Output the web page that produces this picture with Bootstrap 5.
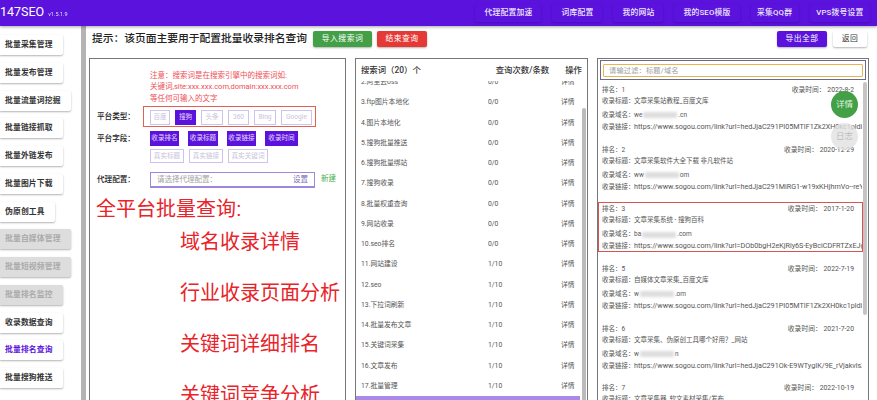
<!DOCTYPE html>
<html lang="zh"><head><meta charset="utf-8"><title>147SEO</title>
<link rel="stylesheet" href="https://cdn.jsdelivr.net/npm/bootstrap@5.3.0/dist/css/bootstrap.min.css">
<style>
html,body{height:400px;overflow:hidden;margin:0}
body{font-family:Roboto,"Noto Sans CJK SC",sans-serif;color:#333;background:#fff;font-size:8px}
.shell{height:400px;width:877px;overflow:hidden}
.topbar{height:26px;background:#5a12dc;box-shadow:0 1px 3px rgba(0,0,0,.35);color:#fff;position:relative;z-index:2}
.logo{font-size:12.5px;line-height:18px}
.ver{font-size:5.5px;margin-left:4px;opacity:.85}
.topnav{padding-right:7px;gap:11px}
.topnav span{padding:3px 9px 4px;font-size:7.8px;letter-spacing:.2px;font-weight:500;box-shadow:0 1px 2px rgba(40,0,110,.35);border-radius:2px;color:#eee8ff;white-space:nowrap}
.topnav span.tight{padding-left:6.5px;padding-right:6.5px}
.side{width:81px;padding-top:9px;gap:7.75px;flex:none;overflow:hidden}
.sidebtn{height:20px;line-height:20px;padding:0 10px 0 5px;font-size:7.8px;font-weight:700;color:#333;background:#fff;border-radius:0 2px 2px 0;box-shadow:0 1px 2px rgba(0,0,0,.3);letter-spacing:.02em;white-space:nowrap;align-self:flex-start;flex:none}
.sidebtn.off{background:#ddd;color:#aaa}
.sidebtn.on{color:#5a12dc}
.vbar{width:5px;background:#b4b4b4;flex:none}
.workarea{padding-left:3px;width:791px;flex:none}
.headrow{height:32px;padding:0 10px 6px 3px}
.ttl{font-size:10.75px;font-weight:500;color:#222;white-space:nowrap;margin-right:6px}
.act{font-size:7.8px;height:16px;line-height:16px;padding:0;border:0;border-radius:2px;color:#fff;letter-spacing:.5px;box-shadow:0 1px 2px rgba(0,0,0,.3)}
.act:hover{color:#fff}
.actg{background:#43a047;width:59px}
.actr{background:#e53935;width:50px;margin-left:5px}
.actp{background:#5a12dc;width:50px}
.actw{background:#fff;color:#333;width:34px;margin-left:6px}
.actw:hover{color:#333}
.panes{gap:9px}
.pane{height:342px;border:1px solid #777;border-bottom:0;overflow:hidden;flex:none;background:#fff;position:relative}
.pa{width:257px}
.pb{width:233px}
.pc{width:272px}
.note{color:#ef4d55;font-size:7.5px;line-height:11.4px;padding:11px 0 0 60px;height:42px;white-space:nowrap}
.lab{width:54px;padding-left:7px;font-size:7.6px;font-weight:500;color:#222;flex:none;white-space:nowrap}
.typebox{border:1px solid #e2604f;height:21px;width:173px;margin-left:-1px;padding:3px 0 0 6px;gap:5px}
.tag{height:14.5px;line-height:12.5px;font-size:6.6px;border:1px solid #cfc3ee;color:#c9c3dc;padding:0;text-align:center;white-space:nowrap;flex:none}
.tag.sel{background:#5a12dc;border-color:#5a12dc;color:#e6dcff}
.fields{gap:9px;margin-bottom:3px}
.fields2{gap:5px}
.fields .tag{color:#e6dcff}
.fieldcol{margin-left:6px}
.proxy{border:1px solid #9f86de;border-width:1px 1px 2px 1px;height:16px;width:165px;margin-left:6px;padding:0 6px;color:#a3a3a3;font-size:7.5px;line-height:13px}
.proxy b{font-weight:400;color:#7b6bb0}
.newlink{color:#4caf50;font-size:7.5px;margin-left:6px;padding-bottom:3px}
.bigred{color:#e8232a;font-family:"Liberation Sans","Noto Sans CJK SC",sans-serif;font-size:20px;line-height:30px;white-space:nowrap;margin-top:6px}
.bigred div{margin-left:90px;margin-bottom:21px}
.bigred div.first{margin-left:6px;margin-bottom:3px}
.midhead{height:22px;padding:0 5px;font-size:8.4px;color:#333;font-weight:500;white-space:nowrap}
.midlist{height:320px;overflow:hidden;position:relative}
.midrow{height:20.25px;line-height:20.25px;font-size:6.8px;color:#555;padding-left:5px;width:221px;white-space:nowrap}
.midrow:first-child{margin-top:-9px}
.c2{margin-left:auto;width:73px}
.c3{width:16px}
.midrow.hi{background:#a98ae8;height:30px;margin-top:0;width:224px}
.sbm{position:absolute;right:1px;top:27px;width:4px;height:293px;background:#bbb;border-radius:2px}
.filt{margin:1px 2px 0 2px;height:20px;border:1px solid #6a6a8a;padding:3px 2px}
.filtin{height:13px;border:1px solid #e6b64c;border-radius:1px;color:#a0a0a0;font-size:7.2px;line-height:11px;padding-left:5px;letter-spacing:.2px}
.rows{padding:2.5px 0 0 0;height:320px;overflow:hidden;width:265px}
.hit{padding:1.5px 0 1.3px 3px;margin-bottom:9.7px;border:1px solid transparent;height:50px;flex:none;width:265px;overflow:hidden}
.hit.red{border-color:#d9534f}
.ln{height:11px;line-height:11px;font-size:6.5px;color:#555;white-space:nowrap;overflow:hidden}
.ln.gap3{margin-top:3px}
.ln i{font-style:normal;display:inline-block;width:32px}
.ln em{font-style:normal;margin-left:auto;padding-right:8px;font-size:6.8px}
.ln u{text-decoration:none;font-size:7.2px}
.smudge{display:inline-block;width:34px;height:6px;background:#ddd;filter:blur(1.5px);vertical-align:middle;margin:0 1px}
.sbr{position:absolute;right:1px;top:23px;width:4px;height:233px;background:#c4c4c4;border-radius:2px}
.fab{position:absolute;width:27px;height:27px;border-radius:50%;font-size:8.5px;line-height:27px;text-align:center;left:233px}
.fabg{top:32px;background:#43a047;color:#dff2df}
.fabl{top:64px;background:rgba(225,225,225,.8);color:#bbb}
.rowtype{margin-top:5px}
.rowfield{margin-top:4px}
.rowproxy{margin-top:9px}
.labtop{padding-top:2px}
</style></head><body>
<div class="shell d-flex flex-column">
 <header class="topbar d-flex align-items-center">
  <div class="logo text-nowrap">147SEO<span class="ver">v1.5.1.9</span></div>
  <nav class="topnav d-flex ms-auto">
   <span>代理配置加速</span><span>词库配置</span><span>我的网站</span><span>我的SEO模版</span><span class="tight">采集QQ群</span><span class="tight">VPS拨号设置</span>
  </nav>
 </header>
 <div class="d-flex flex-grow-1 overflow-hidden">
  <aside class="side d-flex flex-column">
   <div class="sidebtn">批量采集管理</div><div class="sidebtn">批量发布管理</div><div class="sidebtn">批量流量词挖掘</div><div class="sidebtn">批量链接抓取</div><div class="sidebtn">批量外链发布</div><div class="sidebtn">批量图片下载</div><div class="sidebtn">伪原创工具</div><div class="sidebtn off">批量自媒体管理</div><div class="sidebtn off">批量短视频管理</div><div class="sidebtn off">批量排名监控</div><div class="sidebtn">收录数据查询</div><div class="sidebtn on">批量排名查询</div><div class="sidebtn">批量搜狗推送</div>
  </aside>
  <div class="vbar"></div>
  <main class="workarea">
   <div class="headrow d-flex align-items-center">
    <div class="ttl">提示：该页面主要用于配置批量收录排名查询</div>
    <button class="btn act actg">导入搜索词</button>
    <button class="btn act actr">结束查询</button>
    <button class="btn act actp ms-auto">导出全部</button>
    <button class="btn act actw">返回</button>
   </div>
   <div class="panes d-flex">
    <section class="pane pa">
     <div class="note">注意：搜索词是在搜索引擎中的搜索词如:<br>关键词,site:xxx.xxx.com,domain:xxx.xxx.com<br>等任何可输入的文字</div>
     <div class="d-flex align-items-center rowtype">
      <div class="lab">平台类型：</div>
      <div class="typebox d-flex">
       <span class="tag" style="width:20px">百度</span><span class="tag sel" style="width:21px">搜狗</span><span class="tag" style="width:22px">头条</span><span class="tag" style="width:21px">360</span><span class="tag" style="width:22px">Bing</span><span class="tag" style="width:31px">Google</span>
      </div>
     </div>
     <div class="d-flex rowfield">
      <div class="lab labtop">平台字段：</div>
      <div class="fieldcol">
       <div class="fields d-flex"><span class="tag sel" style="width:29px">收录排名</span><span class="tag sel" style="width:30px">收录标题</span><span class="tag sel" style="width:29px">收录链接</span><span class="tag sel" style="width:33px">收录时间</span></div>
       <div class="fields2 d-flex"><span class="tag" style="width:34px">真实标题</span><span class="tag" style="width:34px">真实链接</span><span class="tag" style="width:40px">真实关键词</span></div>
      </div>
     </div>
     <div class="d-flex align-items-center rowproxy">
      <div class="lab">代理配置：</div>
      <div class="proxy d-flex justify-content-between"><span>请选择代理配置：</span><b>设置</b></div>
      <div class="newlink">新建</div>
     </div>
     <div class="bigred">
      <div class="first">全平台批量查询:</div>
      <div>域名收录详情</div><div>行业收录页面分析</div><div>关键词详细排名</div><div>关键词竞争分析</div>
     </div>
    </section>
    <section class="pane pb">
     <div class="midhead d-flex align-items-center"><span>搜索词（20）个</span><span class="ms-auto">查询次数/条数</span><span class="ms-3">操作</span></div>
     <div class="midlist">
      <div class="midrow d-flex"><span>2.阿里云oss</span><span class="c2">0/0</span><span class="c3">详情</span></div>
      <div class="midrow d-flex"><span>3.ftp图片本地化</span><span class="c2">0/0</span><span class="c3">详情</span></div>
      <div class="midrow d-flex"><span>4.图片本地化</span><span class="c2">0/0</span><span class="c3">详情</span></div>
      <div class="midrow d-flex"><span>5.搜狗批量推送</span><span class="c2">0/0</span><span class="c3">详情</span></div>
      <div class="midrow d-flex"><span>6.搜狗批量绑站</span><span class="c2">0/0</span><span class="c3">详情</span></div>
      <div class="midrow d-flex"><span>7.搜狗收录</span><span class="c2">0/0</span><span class="c3">详情</span></div>
      <div class="midrow d-flex"><span>8.批量权重查询</span><span class="c2">0/0</span><span class="c3">详情</span></div>
      <div class="midrow d-flex"><span>9.网站收录</span><span class="c2">0/0</span><span class="c3">详情</span></div>
      <div class="midrow d-flex"><span>10.seo排名</span><span class="c2">0/0</span><span class="c3">详情</span></div>
      <div class="midrow d-flex"><span>11.网站建设</span><span class="c2">1/10</span><span class="c3">详情</span></div>
      <div class="midrow d-flex"><span>12.seo</span><span class="c2">1/10</span><span class="c3">详情</span></div>
      <div class="midrow d-flex"><span>13.下拉词刷新</span><span class="c2">1/10</span><span class="c3">详情</span></div>
      <div class="midrow d-flex"><span>14.批量发布文章</span><span class="c2">1/10</span><span class="c3">详情</span></div>
      <div class="midrow d-flex"><span>15.关键词采集</span><span class="c2">1/10</span><span class="c3">详情</span></div>
      <div class="midrow d-flex"><span>16.文章发布</span><span class="c2">1/10</span><span class="c3">详情</span></div>
      <div class="midrow d-flex"><span>17.批量管理</span><span class="c2">1/10</span><span class="c3">详情</span></div>
      <div class="midrow hi"></div>
      <div class="sbm"></div>
     </div>
    </section>
    <section class="pane pc">
     <div class="filt"><div class="filtin">请输过滤：标题/域名</div></div>
     <div class="rows d-flex flex-column">
      <div class="hit"><div class="ln d-flex"><span>排名：1</span><em>收录时间：&nbsp;2022-8-2</em></div><div class="ln"><i>收录标题：</i>文章采集站教程_百度文库</div><div class="ln gap3"><i>收录域名：</i>we<span class="smudge"></span>.cn</div><div class="ln"><i>收录链接：</i><u>https://www.sogou.com/link?url=hedJjaC291PI05MTIF1Zk2XH0kc1pldiZhckmlxHI</u></div></div>
      <div class="hit"><div class="ln d-flex"><span>排名：2</span><em>收录时间：&nbsp;2020-12-29</em></div><div class="ln"><i>收录标题：</i>文章采集软件大全下载 非凡软件站</div><div class="ln gap3"><i>收录域名：</i>ww<span class="smudge"></span>om</div><div class="ln"><i>收录链接：</i><u>https://www.sogou.com/link?url=hedJjaC291MiRG1-w19xKHjhmVo--reYdZOQFabc</u></div></div>
      <div class="hit red"><div class="ln d-flex"><span>排名：3</span><em>收录时间：&nbsp;2017-1-20</em></div><div class="ln"><i>收录标题：</i>文章采集系统 - 搜狗百科</div><div class="ln gap3"><i>收录域名：</i>ba<span class="smudge"></span>.com</div><div class="ln"><i>收录链接：</i><u>https://www.sogou.com/link?url=DOb0bgH2eKjRiy6S-EyBciCDFRTZxEJgQp06abcd</u></div></div>
      <div class="hit"><div class="ln d-flex"><span>排名：5</span><em>收录时间：&nbsp;2022-7-19</em></div><div class="ln"><i>收录标题：</i>自媒体文章采集_百度文库</div><div class="ln gap3"><i>收录域名：</i>w<span class="smudge"></span>.om</div><div class="ln"><i>收录链接：</i><u>https://www.sogou.com/link?url=hedJjaC291PI05MTIF1Zk2XH0kc1pldiZhckmlxHI</u></div></div>
      <div class="hit"><div class="ln d-flex"><span>排名：6</span><em>收录时间：&nbsp;2021-7-20</em></div><div class="ln"><i>收录标题：</i>文章采集、伪原创工具哪个好用？_网站</div><div class="ln gap3"><i>收录域名：</i>w<span class="smudge"></span>n</div><div class="ln"><i>收录链接：</i><u>https://www.sogou.com/link?url=hedJjaC291Ok-E9WTygIK/9E_rVjakvlsZreKQPfabc</u></div></div>
      <div class="hit"><div class="ln d-flex"><span>排名：7</span><em>收录时间：&nbsp;2022-10-19</em></div><div class="ln"><i>收录标题：</i>文章采集器_软文素材采集/发布</div></div>
     </div>
     <div class="sbr"></div>
     <div class="fab fabg">详情</div>
     <div class="fab fabl">日志</div>
    </section>
   </div>
  </main>
 </div>
</div>
<script src="https://cdn.jsdelivr.net/npm/bootstrap@5.3.0/dist/js/bootstrap.bundle.min.js"></script>
</body></html>
